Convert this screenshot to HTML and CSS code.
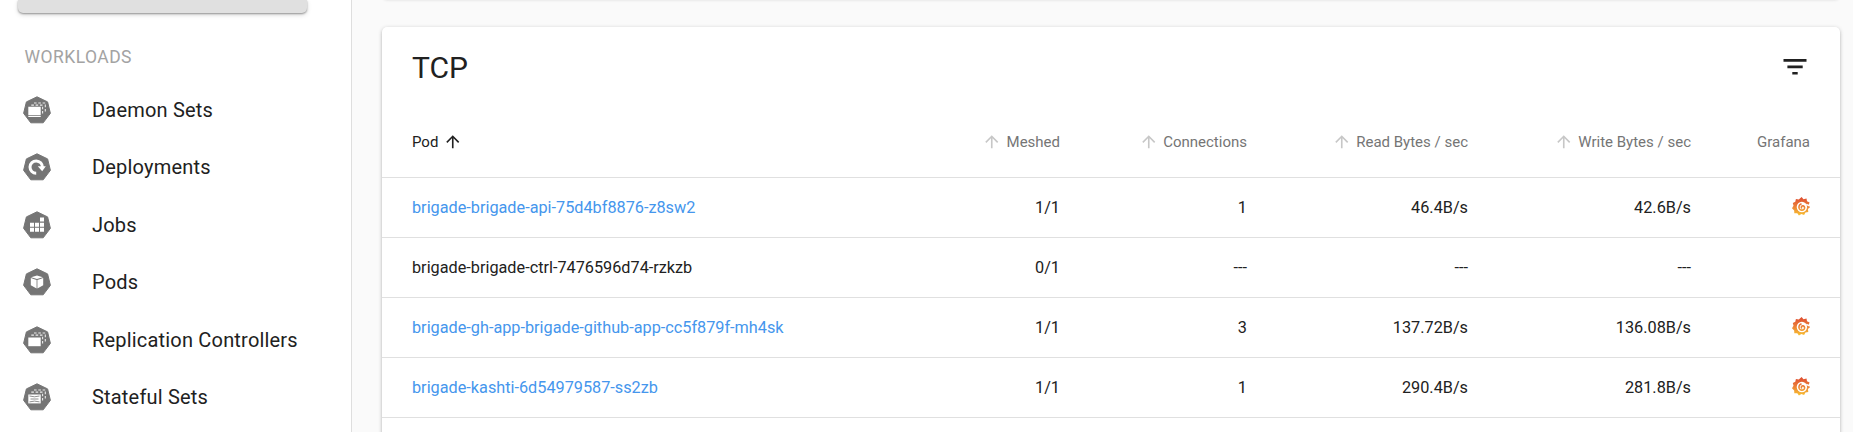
FILE: index.html
```html
<!DOCTYPE html>
<html lang="en">
<head>
<meta charset="utf-8">
<title>Linkerd</title>
<link rel="stylesheet" href="styles.css">
</head>
<body>
<svg width="0" height="0" class="defs" aria-hidden="true">
  <defs>
    <linearGradient id="flame" gradientUnits="userSpaceOnUse" x1="0" y1="0" x2="0" y2="19"><stop offset="0" stop-color="#de4a30"/><stop offset=".45" stop-color="#ea7b38"/><stop offset="1" stop-color="#f9c430"/></linearGradient>
    <symbol id="hepta" viewBox="0 0 28 28"><path fill="#757575" stroke="#757575" stroke-width="1" stroke-linejoin="round" d="M14 .8 24.6 5.9 27.4 17.3 20.2 26.8H7.8L.6 17.3 3.4 5.9z"/></symbol>
    <symbol id="stack" viewBox="0 0 28 28"><g fill="none" stroke="#fff" stroke-width="1.1" stroke-opacity=".85"><path stroke-dasharray="2.600 1.700" d="M11 7h11.300v9"/><path stroke-dasharray="2.600 1.700" d="M8.300 9.100h11.300v9"/></g></symbol>
    <symbol id="grafana" viewBox="0 0 18 19"><path fill="url(#flame)" d="M9.600 0l1.900 2.200 3-.7.5 2.800 2.600 1.200-1 2.500 1.400 2.300-2.100 1.700.4 3-2.900.4-1.300 2.700-2.700-1-2.500 1.500-1.600-2.400-3 .1-.1-2.900L0 11.200l1.500-2.500L.8 5.900l2.500-1.100.6-2.900 2.900.5z"/><circle cx="9.900" cy="10" r="5.200" fill="#fff"/><path fill="none" stroke="#fff" stroke-width="1.300" d="M14.300 7.300L17.400 8.900"/><path fill="none" stroke="url(#flame)" stroke-width="1.600" stroke-linecap="round" d="M9.500 10.900C8.900 9.600 10 8.600 11.200 8.900c1.500.4 1.800 2.200.9 3.300-1.300 1.400-3.700 1.200-4.700-.4-1-1.800-.3-4 1.600-4.800"/></symbol>
    <symbol id="arrow" viewBox="0 0 24 24"><path fill="currentColor" d="M4 12l1.410 1.410L11 7.830V20h2V7.830l5.580 5.590L20 12l-8-8-8 8z"/></symbol>
  </defs>
</svg>
<div class="app">
  <aside class="sidebar">
    <div class="select"></div>
    <h2 class="heading">WORKLOADS</h2>
    <nav class="nav">
      <a class="item"><svg class="ico" viewBox="0 0 28 28"><use href="#hepta"/><use href="#stack"/><path fill="#fff" d="M5.300 10.700h12.400v8.600H5.300zM5.300 20h12.400v1H5.300z"/></svg>Daemon Sets</a>
      <a class="item"><svg class="ico" viewBox="0 0 28 28"><use href="#hepta"/><path fill="none" stroke="#fff" stroke-width="3" d="M13.200 20.300A6.200 6.200 0 1 1 19.400 14.300"/><path fill="#fff" d="M14.800 13.300h8l-3.600 5z"/></svg>Deployments</a>
      <a class="item"><svg class="ico" viewBox="0 0 28 28"><use href="#hepta"/><path fill="#fff" d="M17 6.500h4v4h-4zM7 11.700h4v4H7zM12 11.700h4v4h-4zM17 11.700h4v4h-4zM7 16.800h4v4H7zM12 16.800h4v4h-4zM17 16.800h4v4h-4z"/></svg>Jobs</a>
      <a class="item"><svg class="ico" viewBox="0 0 28 28"><use href="#hepta"/><path fill="#fff" d="M14 7.500l5.900 1.700L14 11 8.100 9.200zM7.800 10.100l5.800 1.800v8.600l-5.800-3.300zM20.200 10.100l-5.800 1.800v8.600l5.800-3.300z"/></svg>Pods</a>
      <a class="item"><svg class="ico" viewBox="0 0 28 28"><use href="#hepta"/><use href="#stack"/><path fill="#fff" d="M5.300 11.500h12.400v8.700H5.300z"/></svg>Replication Controllers</a>
      <a class="item"><svg class="ico" viewBox="0 0 28 28"><use href="#hepta"/><use href="#stack"/><path fill="#fff" d="M5.300 11.500h12.400v8.900H5.300z"/><path fill="none" stroke="#757575" stroke-width=".8" d="M6.500 13q5 1.600 10 0M7.500 16h8M6.500 18.900q5-1.600 10 0"/></svg>Stateful Sets</a>
    </nav>
  </aside>
  <main class="main">
    <section class="card previous"></section>
    <section class="card">
      <header class="toolbar"><h1 class="title">TCP</h1>
        <svg class="filter" viewBox="0 0 24 16" aria-label="Filter"><path fill="#212121" d="M.500 0h23v2.700H.500zM4.400 6.500h15.300v2.700H4.400zM9.300 13h5.400v2.600H9.300z"/></svg>
      </header>
      <table class="table">
        <colgroup><col class="c-pod"><col class="c-mesh"><col class="c-conn"><col class="c-read"><col class="c-write"><col class="c-graf"></colgroup>
        <thead><tr>
          <th class="sorted"><span class="label">Pod<svg class="arrow"><use href="#arrow"/></svg></span></th>
          <th><span class="label"><svg class="arrow"><use href="#arrow"/></svg>Meshed</span></th>
          <th><span class="label"><svg class="arrow"><use href="#arrow"/></svg>Connections</span></th>
          <th><span class="label"><svg class="arrow"><use href="#arrow"/></svg>Read Bytes / sec</span></th>
          <th><span class="label"><svg class="arrow"><use href="#arrow"/></svg>Write Bytes / sec</span></th>
          <th><span class="label">Grafana</span></th>
        </tr></thead>
        <tbody>
          <tr><td><a class="link">brigade-brigade-api-75d4bf8876-z8sw2</a></td><td>1/1</td><td>1</td><td>46.4B/s</td><td>42.6B/s</td><td><svg class="grafana"><use href="#grafana"/></svg></td></tr>
          <tr><td>brigade-brigade-ctrl-7476596d74-rzkzb</td><td>0/1</td><td>---</td><td>---</td><td>---</td><td></td></tr>
          <tr><td><a class="link">brigade-gh-app-brigade-github-app-cc5f879f-mh4sk</a></td><td>1/1</td><td>3</td><td>137.72B/s</td><td>136.08B/s</td><td><svg class="grafana"><use href="#grafana"/></svg></td></tr>
          <tr><td><a class="link">brigade-kashti-6d54979587-ss2zb</a></td><td>1/1</td><td>1</td><td>290.4B/s</td><td>281.8B/s</td><td><svg class="grafana"><use href="#grafana"/></svg></td></tr>
        </tbody>
      </table>
    </section>
  </main>
</div>
</body>
</html>
```
FILE: styles.css
```css
* { box-sizing: border-box; }
body { margin: 0; height: 432px; overflow: hidden; background: #fafafa; color: #212121; font-family: Roboto, sans-serif; }
.defs { position: absolute; }
.app { display: flex; height: 432px; overflow: hidden; }
.sidebar { width: 352px; flex: none; background: #fff; border-right: 1px solid #dedede; }
.select { width: 289px; height: 13px; margin-left: 18px; background: #e0e0e0; border-radius: 0 0 5px 5px; box-shadow: 0 1px 2px rgba(0,0,0,.35), 0 2px 5px rgba(0,0,0,.14); }
.heading { margin: 32px 0 0 24.5px; height: 24px; line-height: 24px; font-size: 17.5px; font-weight: 400; letter-spacing: .45px; color: #a3a3a3; }
.nav { margin-top: 12px; }
.item { display: flex; align-items: center; height: 57.5px; padding-left: 23px; font-size: 20px; letter-spacing: .19px; }
.ico { width: 28px; height: 28px; margin-right: 41px; }
.main { flex: 1; padding: 0 13px 0 30px; }
.card { background: #fff; border-radius: 5px; box-shadow: 0 1px 4px rgba(0,0,0,.2), 0 2px 3px rgba(0,0,0,.12), 0 3px 2px -2px rgba(0,0,0,.12); height: 420px; }
.card.previous { height: 10px; margin: -11px 0 28px; box-shadow: 0 1px 3px rgba(0,0,0,.14); }
.toolbar { display: flex; justify-content: space-between; align-items: center; height: 81px; padding: 0 33px 0 30px; }
.title { margin: 0; font-size: 30px; font-weight: 400; }
.filter { width: 24px; height: 16px; margin-bottom: 2px; }
.table { width: 1458px; table-layout: fixed; border-collapse: separate; border-spacing: 0; }
.c-pod { width: 532px; } .c-mesh { width: 176px; } .c-conn { width: 187px; } .c-read { width: 221px; } .c-write { width: 223px; } .c-graf { width: 119px; }
.table th, .table td { height: 60px; padding: 0 30px 0 0; text-align: right; border-bottom: 1px solid #e0e0e0; font-size: 16.25px; font-weight: 400; letter-spacing: 0; white-space: nowrap; }
.table th { height: 70px; font-size: 15px; color: #757575; }
.table th:first-child, .table td:first-child { padding: 0 0 0 30px; text-align: left; }
.table th.sorted { color: #212121; }
.label { display: flex; align-items: center; justify-content: flex-end; gap: 5px; height: 20px; line-height: 20px; margin-bottom: 2px; }
.sorted .label { justify-content: flex-start; }
.arrow { width: 19.5px; height: 19.5px; color: #c7c7c7; }
.sorted .arrow { color: #212121; }
.link { color: #4596ed; }
.grafana { display: block; width: 18px; height: 19px; margin: 0 0 3px auto; }
```
